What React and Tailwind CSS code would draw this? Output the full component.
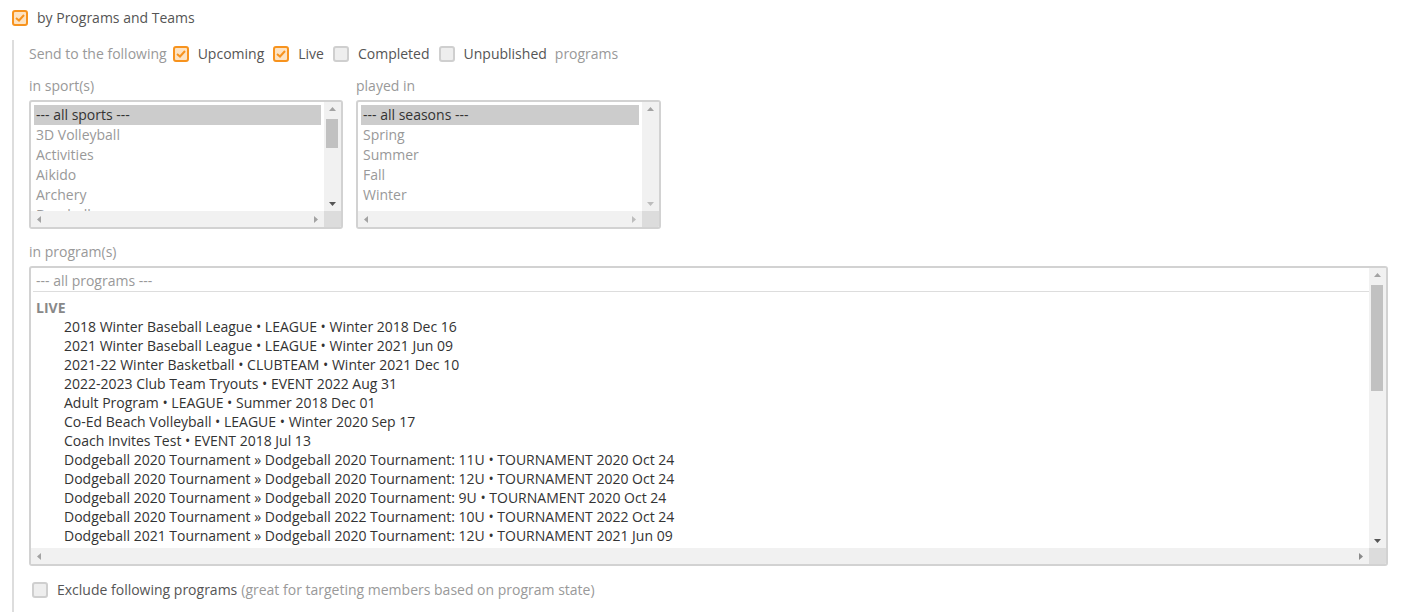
import React from "react";

const Check = ({ checked }) => (
  <span
    className={
      "inline-flex items-center justify-center w-4 h-4 shrink-0 rounded-[3px] border-2 " +
      (checked ? "border-[#f7931e] bg-[#fde3c3]" : "border-[#cfcfcf] bg-[#eeeeee]")
    }
  >
    {checked && (
      <svg width="10" height="8" viewBox="0 0 10 8">
        <path d="M1 4 L4 6.5 L9 1" fill="none" stroke="#f7931e" strokeWidth="2" />
      </svg>
    )}
  </span>
);

const Arrow = ({ dir, color = "#a3a3a3" }) => {
  const pts = {
    up: "0,4 3.5,0 7,4",
    down: "0,0 3.5,4 7,0",
    left: "4,0 0,3.5 4,7",
    right: "0,0 4,3.5 0,7",
  }[dir];
  const w = dir === "up" || dir === "down" ? 7 : 4;
  const h = dir === "up" || dir === "down" ? 4 : 7;
  return (
    <svg width={w} height={h} viewBox={`0 0 ${w} ${h}`}>
      <polygon points={pts} fill={color} />
    </svg>
  );
};

const FakeSelect = ({ className, thumbTop, thumbHeight, downColor, rightColor, children }) => (
  <div className={"flex flex-col border-2 border-[#d2d2d2] rounded-[3px] bg-white overflow-hidden " + className}>
    <div className="flex flex-1 min-h-0">
      <div className="flex-1 overflow-hidden">{children}</div>
      <div className="w-[17px] bg-[#f1f1f1] flex flex-col items-center py-[5px] relative">
        <Arrow dir="up" />
        <div className="flex-1" />
        <Arrow dir="down" color={downColor} />
        <div
          className="absolute left-[2px] w-[12px] bg-[#c1c1c1]"
          style={{ top: thumbTop, height: thumbHeight }}
        />
      </div>
    </div>
    <div className="flex h-[16px]">
      <div className="flex-1 bg-[#f1f1f1] flex items-center justify-between px-[6px]">
        <Arrow dir="left" />
        <Arrow dir="right" color={rightColor} />
      </div>
      <div className="w-[17px] bg-[#dcdcdc]" />
    </div>
  </div>
);

const sports = ["3D Volleyball", "Activities", "Aikido", "Archery", "Baseball", "Basketball"];
const seasons = ["Spring", "Summer", "Fall", "Winter"];
const programs = [
  "2018 Winter Baseball League • LEAGUE • Winter 2018 Dec 16",
  "2021 Winter Baseball League • LEAGUE • Winter 2021 Jun 09",
  "2021-22 Winter Basketball • CLUBTEAM • Winter 2021 Dec 10",
  "2022-2023 Club Team Tryouts • EVENT 2022 Aug 31",
  "Adult Program • LEAGUE • Summer 2018 Dec 01",
  "Co-Ed Beach Volleyball • LEAGUE • Winter 2020 Sep 17",
  "Coach Invites Test • EVENT 2018 Jul 13",
  "Dodgeball 2020 Tournament » Dodgeball 2020 Tournament: 11U • TOURNAMENT 2020 Oct 24",
  "Dodgeball 2020 Tournament » Dodgeball 2020 Tournament: 12U • TOURNAMENT 2020 Oct 24",
  "Dodgeball 2020 Tournament » Dodgeball 2020 Tournament: 9U • TOURNAMENT 2020 Oct 24",
  "Dodgeball 2020 Tournament » Dodgeball 2022 Tournament: 10U • TOURNAMENT 2022 Oct 24",
  "Dodgeball 2021 Tournament » Dodgeball 2020 Tournament: 12U • TOURNAMENT 2021 Jun 09",
  "Dodgeball 2021 Tournament » Dodgeball 2021 Tournament: 10U • TOURNAMENT 2021 Jun 09",
];

export default function App() {
  return (
    <div
      className="bg-white w-[1401px] h-[612px] overflow-hidden px-3 pt-[8px] text-[14px] leading-[20px] text-[#555]"
      style={{ fontFamily: '"Open Sans", "Liberation Sans", sans-serif' }}
    >
      <label className="flex items-center gap-[9px] h-5">
        <Check checked />
        <span>by Programs and Teams</span>
      </label>

      <div className="mt-3 border-l-2 border-[#dddddd] pl-[15px] pt-1 pb-4">
        <div className="flex items-center h-5">
          <span className="text-[#999] mr-[6px]">Send to the following</span>
          <Check checked />
          <span className="ml-[9px] mr-[9px]">Upcoming</span>
          <Check checked />
          <span className="ml-[9px] mr-[9px]">Live</span>
          <Check />
          <span className="ml-[9px] mr-[9px]">Completed</span>
          <Check />
          <span className="ml-[9px] mr-[8px]">Unpublished</span>
          <span className="text-[#999]">programs</span>
        </div>

        <div className="flex gap-[13px] mt-3">
          <div>
            <div className="text-[#999] mb-1">in sport(s)</div>
            <FakeSelect className="w-[314px] h-[129px]" thumbTop={17} thumbHeight={29} downColor="#555" rightColor="#a3a3a3">
              <div className="pt-[3px] pl-[3px] pr-[3px]">
                <div className="bg-[#cccccc] text-[#333] px-[2px]">--- all sports ---</div>
                {sports.map((s) => (
                  <div key={s} className="text-[#999] px-[2px] whitespace-nowrap">{s}</div>
                ))}
              </div>
            </FakeSelect>
          </div>
          <div>
            <div className="text-[#999] mb-1">played in</div>
            <FakeSelect className="w-[305px] h-[129px]" thumbTop={0} thumbHeight={0} downColor="#bdbdbd" rightColor="#bdbdbd">
              <div className="pt-[3px] pl-[3px] pr-[3px]">
                <div className="bg-[#cccccc] text-[#333] px-[2px]">--- all seasons ---</div>
                {seasons.map((s) => (
                  <div key={s} className="text-[#999] px-[2px] whitespace-nowrap">{s}</div>
                ))}
              </div>
            </FakeSelect>
          </div>
        </div>

        <div className="text-[#999] mt-[13px] mb-1">in program(s)</div>
        <FakeSelect className="w-[1359px] h-[300px]" thumbTop={17} thumbHeight={106} downColor="#555" rightColor="#8a8a8a">
          <div className="pl-[2px] pt-[2px]">
            <div className="text-[#999] px-[3px] leading-[21px] border-b border-[#dddddd]">--- all programs ---</div>
            <div className="px-[3px] pt-[6px] font-bold text-[#888] leading-[19px]">LIVE</div>
            {programs.map((p) => (
              <div key={p} className="pl-[31px] text-[#333] leading-[19px] whitespace-nowrap">{p}</div>
            ))}
          </div>
        </FakeSelect>

        <label className="flex items-center mt-[14px] h-5 pl-[3px]">
          <Check />
          <span className="ml-[9px]">Exclude following programs</span>
          <span className="ml-[4px] text-[#999]">(great for targeting members based on program state)</span>
        </label>
      </div>
    </div>
  );
}
